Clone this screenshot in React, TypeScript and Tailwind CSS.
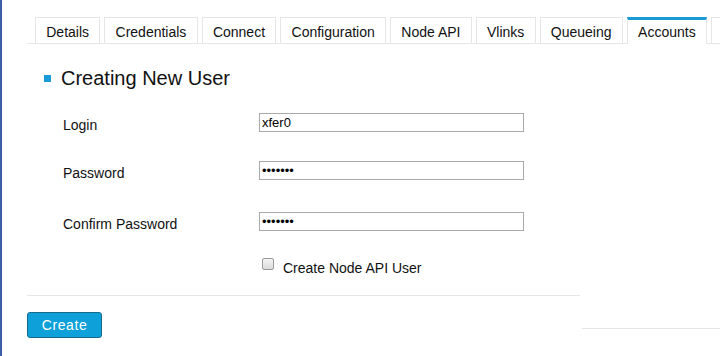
import React from "react";

const tabs = [
  "Details",
  "Credentials",
  "Connect",
  "Configuration",
  "Node API",
  "Vlinks",
  "Queueing",
  "Accounts",
];

const fields = [
  { label: "Login", value: "xfer0", type: "text", top: "mt-[23px]" },
  { label: "Password", value: "1234567", type: "password", top: "mt-[29px]" },
  { label: "Confirm Password", value: "1234567", type: "password", top: "mt-[32px]" },
];

export default function App() {
  return (
    <div
      className="flex h-[356px] w-[720px] overflow-hidden bg-white text-[14px] text-[#111]"
      style={{ fontFamily: '"Liberation Sans", Arial, sans-serif' }}
    >
      <div className="w-[2px] shrink-0 bg-[#3b5ea6]" />
      <div className="flex-1 pl-[25px]">
        {/* tabs */}
        <div className="mt-[17px] flex gap-1 border-b border-[#e6e6e6] pl-[8px]">
          {tabs.map((t) => (
            <div
              key={t}
              className={
                t === "Accounts"
                  ? "-mb-px h-[27px] shrink-0 border-x border-t-[3px] border-x-[#e6e6e6] border-t-[#1a9bd6] bg-white px-[10.25px] pt-[3px] leading-[18px]"
                  : "h-[26px] shrink-0 border-x border-t border-[#e6e6e6] px-[10.25px] pt-[5px] leading-[18px]"
              }
            >
              {t}
            </div>
          ))}
          <div className="h-[26px] w-[20px] shrink-0 border-x border-t border-[#e6e6e6]" />
        </div>

        <div className="flex items-start">
          <div className="w-[553px] shrink-0">
            <div className="mt-[22px] flex items-center pl-[17px]">
              <span className="mr-[10px] inline-block h-[7px] w-[7px] bg-[#1a9ad6]" />
              <h1 className="text-[20px] leading-[24px] text-[#111]">Creating New User</h1>
            </div>

            {fields.map((f) => (
              <div key={f.label} className={`${f.top} flex items-center`}>
                <label className="h-[19px] w-[232px] pl-[36px] leading-[24px]">{f.label}</label>
                <input
                  type={f.type}
                  defaultValue={f.value}
                  className="h-[19px] w-[265px] border border-[#a9a9a9] px-[2px] text-[13px] leading-[17px] text-black outline-none"
                />
              </div>
            ))}

            <div className="mt-[27px] flex items-center pl-[235px]">
              <span className="inline-block h-[12px] w-[12px] rounded-[2px] border border-[#9a9a9a] bg-gradient-to-b from-[#f4f4f4] to-[#dcdcdc]" />
              <span className="ml-[9px] h-[12px] leading-[20px]">Create Node API User</span>
            </div>

            <div className="mt-[25px] border-b border-[#e6e6e6]" />

            <button className="mt-[16px] h-[26px] w-[75px] rounded-[3px] border border-[#17698a] bg-[#0ea0d8] text-[14px] tracking-[0.6px] text-white">
              Create
            </button>
          </div>
          <div className="mt-[232px] h-[53px] flex-1 border-b border-[#e6e6e6] ml-[2px]" />
        </div>
      </div>
    </div>
  );
}
